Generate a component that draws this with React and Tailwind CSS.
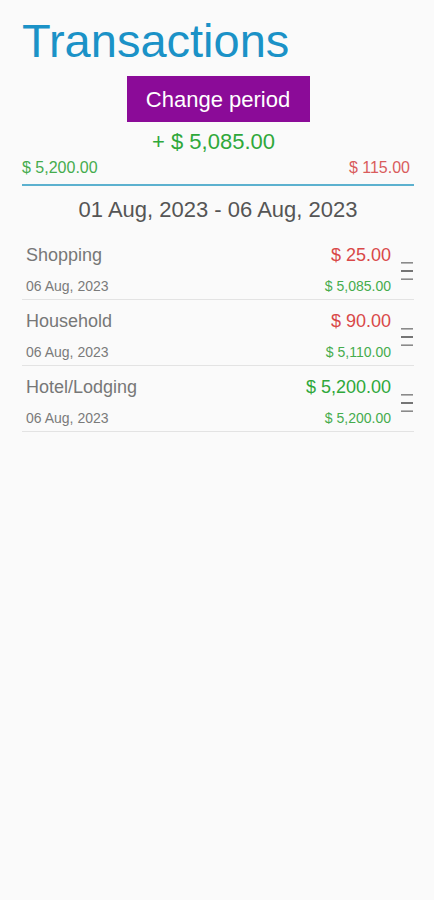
import React from 'react';

const rows = [
  { name: 'Shopping', amount: '$ 25.00', amountColor: 'text-[#d94848]', date: '06 Aug, 2023', balance: '$ 5,085.00' },
  { name: 'Household', amount: '$ 90.00', amountColor: 'text-[#d94848]', date: '06 Aug, 2023', balance: '$ 5,110.00' },
  { name: 'Hotel/Lodging', amount: '$ 5,200.00', amountColor: 'text-[#2fa83a]', date: '06 Aug, 2023', balance: '$ 5,200.00' },
];

const Handle = () => (
  <svg width="14" height="20" viewBox="0 0 14 20" className="shrink-0">
    <rect x="1" y="1" width="12" height="1.6" fill="#8a8a8a" />
    <rect x="1" y="9.2" width="12" height="1.6" fill="#555" />
    <rect x="1" y="17.4" width="12" height="1.6" fill="#8a8a8a" />
  </svg>
);

const App = () => {
  return (
    <div className="min-h-[900px] bg-[#fafafa] pl-[22px] pr-[20px] font-['Liberation_Sans',sans-serif]">
      <h1 className="pt-[18px] text-[47px] leading-[46px] text-[#1b92c7]">Transactions</h1>

      <div className="mt-[12px] flex justify-center">
        <button className="h-[46px] w-[183px] bg-[#8b0b98] text-[22px] text-white">Change period</button>
      </div>

      <div className="mt-[6px] pr-[9px] text-center text-[22px] leading-[28px] text-[#2fa83a]">+ $ 5,085.00</div>

      <div className="mt-[2px] flex justify-between pr-[4px] text-[16px] leading-[20px]">
        <span className="text-[#45ac4d]">$ 5,200.00</span>
        <span className="text-[#d95c5c]">$ 115.00</span>
      </div>

      <div className="mt-[6px] h-[2px] bg-[#5cb1cf]" />

      <div className="mt-[10px] text-center text-[22px] leading-[28px] text-[#555]">
        01 Aug, 2023 - 06 Aug, 2023
      </div>

      <div className="mt-[10px]">
        {rows.map((r) => (
          <div key={r.name} className="flex items-center border-b border-[#e3e3e3] pt-[9px] pb-[4px]">
            <div className="flex-1 pl-[4px]">
              <div className="flex justify-between text-[18px] leading-[24px]">
                <span className="text-[#777]">{r.name}</span>
                <span className={r.amountColor}>{r.amount}</span>
              </div>
              <div className="mt-[10px] flex justify-between text-[14px] leading-[18px]">
                <span className="text-[#7a7a7a]">{r.date}</span>
                <span className="text-[#45ac4d]">{r.balance}</span>
              </div>
            </div>
            <div className="ml-[9px] mt-[4px]">
              <Handle />
            </div>
          </div>
        ))}
      </div>
    </div>
  );
};

export default App;
